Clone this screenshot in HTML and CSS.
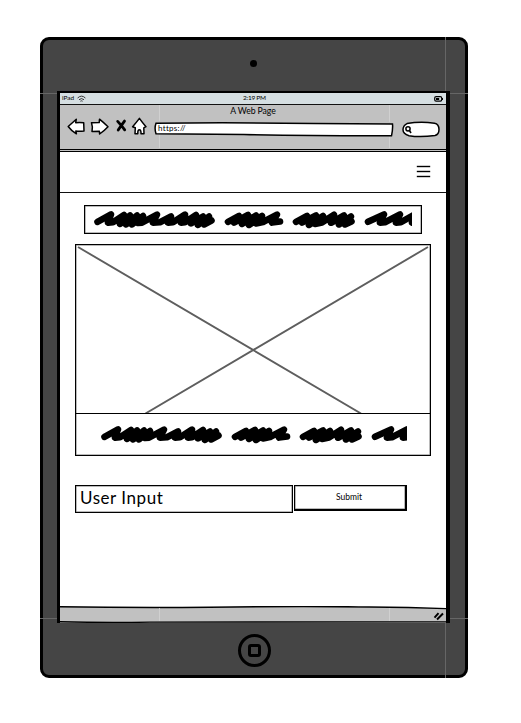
FILE: index.html
```html
<!DOCTYPE html>
<html lang="en">
<head>
<meta charset="utf-8">
<title>A Web Page</title>
<link rel="stylesheet" href="styles.css">
</head>
<body>
<svg class="defs" aria-hidden="true">
  <defs>
    <g id="scribble" fill="none" stroke="#000" stroke-width="6.6" stroke-linecap="round" stroke-linejoin="round">
      <path d="M3.5 11.8 17 4.4 14 12.6 19 12.2 30 5 26 14 36 5.5 32 14.5 43 5.5 38 14.5 49 6 44 13 48 12.6 63 4.6 59 12.6 66 12.2 77 6.5 74 12.6 79 12.2 91 4.6 87 12.6 91 12.2 102 5 97 13.5 109 6.5 104 15 115 6.5 110 14.5 117.5 10.5M94 9H112M27 10H44"/>
      <path d="M134 11.8 145 6 140 12.6 154 5 148 14 162 5.5 155 15 168 6 162 13.5 169 12 183 4.6 178 12.6 186 11.5M138 10H162"/>
      <path d="M202 11.8 213 6 208 12.6 222 5.5 215 15 229 6 221 14 228 12.5 240 4.8 237 12.8 250 5.5 245 14.5 257 6.5 251 14.5 257.5 11.5M206 10H225M240 10H255"/>
      <path d="M274 11.8 290 4.4 286 12.6 291 12.2 306 4.4 302 12.6 307 12.2 321 4.4 318 12.6"/>
    </g>
  </defs>
</svg>
<main class="device">
  <div class="bezel-top"><i class="camera"></i></div>
  <section class="screen">
    <header class="status">
      <span class="carrier">iPad</span>
      <svg class="wifi" viewBox="0 0 9 8"><path d="M.6 3Q4.5-.7 8.4 3M2 4.7q2.5-2.2 5 0M3.4 6.2q1.1-.8 2.2 0" fill="none" stroke="#222" stroke-width=".9"/></svg>
      <span class="time">2:19 PM</span>
      <svg class="battery" viewBox="0 0 9 6"><rect x=".7" y=".7" width="7" height="4.4" rx="1.4" fill="none" stroke="#000" stroke-width="1.2"/><path d="M2 3h3.2" stroke="#000" stroke-width="2"/><path d="M8.5 2v2" stroke="#000"/></svg>
    </header>
    <div class="browser">
      <div class="page-title">A Web Page</div>
      <div class="tools">
        <svg class="nav-icons" viewBox="0 0 82 20" fill="#fff" stroke="#000" stroke-width="1.5" stroke-linejoin="round" stroke-linecap="round">
          <path d="M1.2 9.5 9.3 2.2 8.7 5.7Q13 5.1 16.7 5.8L17 14Q12 14.5 8.8 14L9.4 16.8Q4 13.5 1.2 9.5Z"/>
          <path d="M24.5 5.8 32.2 5.6 32.5 2.2Q36.5 5.5 41 9.7Q37 14 32.6 17L32.4 14.2 25 14.5Q26 10 24.5 5.8Z"/>
          <path d="M50.7 4.4q4 4.4 7 8.4M57.5 4.1q-3.2 4.2-6.3 9" stroke-width="2.8"/>
          <path d="M65.6 9.7Q69 6 72.4 1.4 75.5 5.8 79 9.7L76.8 10.8 77 16.8 74 16.7Q74.2 12.7 72.3 12.8 70.6 12.8 70.8 16.7L68 16.8 68.3 10.8Z"/>
        </svg>
        <div class="address">
          <svg viewBox="0 0 240 15" preserveAspectRatio="none"><path d="M2 1.2Q80 .4 160 1.5L238.5 2Q239 7 237.5 13.8 160 14 90 12.5L2 11.8Q.2 6 2 1.2Z" fill="#fff" stroke="#000" stroke-width="1.5"/></svg>
          <span>https://</span>
        </div>
        <svg class="search" viewBox="0 0 38 17"><path d="M5 2.6Q18 .2 32.5 2.2 37 3 37 8.5 37 13.5 33 14.5 18 16.5 7 14.7 1 13 1 8.8 1 4.5 5 2.6Z" fill="#fff" stroke="#000" stroke-width="1.5"/><circle cx="6" cy="7.8" r="2.1" fill="none" stroke="#000" stroke-width="1.5"/><path d="M7.4 9.5 9 12" stroke="#000" stroke-width="1.6"/></svg>
      </div>
    </div>
    <nav class="navbar"><div class="menu"><i></i><i></i><i></i></div></nav>
    <div class="content">
      <div class="headline"><svg viewBox="0 0 318 19"><use href="#scribble"/></svg></div>
      <figure class="card">
        <svg class="picture" viewBox="0 0 354 168"><path d="M2 2 285 168.5M352 2 69.5 168.5" stroke="#5e5e5e" stroke-width="1.9"/></svg>
        <figcaption><svg viewBox="0 0 306 19"><use href="#scribble"/></svg></figcaption>
      </figure>
      <div class="form"><div class="field">User Input</div><div class="submit"><span>Submit</span></div></div>
    </div>
    <footer class="footer">
      <svg viewBox="0 0 387 17" preserveAspectRatio="none"><path d="M0 .8Q75 2 150 1.3 240-.2 310 1 350 1.2 387 2.6V17H0Z" fill="#c1c1c1"/><path d="M0 .8Q75 2 150 1.3 240-.2 310 1 350 1.2 387 2.6M0 15.7Q45 17 90 16.1 230 16.6 387 15.9" fill="none" stroke="#000" stroke-width="1.4"/><path d="m375.5 11.7 4-4.5m-1.5 6.3 6-6" stroke="#000" stroke-width="2"/></svg>
    </footer>
  </section>
  <div class="home"><i></i></div>
  <svg class="seams" viewBox="0 0 428 641"><path d="M405.5 0v54M405.5 586v55M0 56.5h17M410 56.5h18M0 581.5h17M410 581.5h18" stroke="#666"/><path d="M119.5 68v16M119.5 98v13M349.5 68v17M349.5 100v11M119.5 571v13M349.5 571v13" stroke="#d0d0d0"/></svg>
</main>
</body>
</html>
```

FILE: styles.css
```css
* { box-sizing: border-box; }
body {
  margin: 0;
  padding: 37px 0 0 40px;
  background: #fff;
  color: #000;
  font-family: Lato, "Open Sans", sans-serif;
}
svg { display: block; }
.defs { position: absolute; width: 0; height: 0; }

.device {
  position: relative;
  width: 428px;
  height: 641px;
  border: 3px solid #000;
  border-radius: 9px;
  background: #454545;
  display: flex;
  flex-direction: column;
  align-items: center;
}
.bezel-top {
  height: 51px;
  display: flex;
  padding-top: 20px;
}
.camera {
  width: 7px;
  height: 7px;
  margin-right: 1px;
  border-radius: 50%;
  background: #000;
}

.screen {
  width: 393px;
  height: 532px;
  flex: none;
  margin-right: 1px;
  border: solid #000;
  border-width: 2px 4px 0 3px;
  background: #fff;
  display: flex;
  flex-direction: column;
}
.status {
  height: 12px;
  flex: none;
  display: flex;
  align-items: center;
  padding: 0 3px 0 2px;
  background: #d6dfe2;
  border-bottom: 1px solid #111;
  font-size: 6.5px;
  line-height: 9px;
}
.carrier { width: 15px; margin-top: -2px; }
.wifi { width: 9px; height: 8px; }
.time { margin: -2px 0 0 157px; width: 30px; white-space: nowrap; letter-spacing: -.25px; }
.battery { width: 9px; height: 6px; margin-left: auto; }

.browser {
  height: 47px;
  flex: none;
  background: #c1c1c1;
  border-bottom: 3px double #000;
}
.page-title {
  height: 15px;
  font-size: 8.7px;
  line-height: 12px;
  letter-spacing: -.1px;
  text-align: center;
}
.tools { display: flex; padding-left: 7px; height: 20px; margin-top: -3px; }
.nav-icons { width: 82px; height: 20px; flex: none; }
.address {
  display: grid;
  width: 240px;
  height: 15px;
  flex: none;
  margin: 5px 0 0 5px;
}
.address > * { grid-area: 1 / 1; }
.address svg { width: 240px; height: 15px; }
.address span { padding-left: 4px; font-size: 8px; line-height: 12px; letter-spacing: .3px; }
.search { width: 38px; height: 17px; margin: 4px 0 0 8px; }

.navbar {
  height: 41px;
  flex: none;
  border-bottom: 1px solid #111;
  display: flex;
  justify-content: flex-end;
  padding: 14px 16px 0 0;
}
.menu { width: 13px; display: grid; gap: 4px; align-content: start; }
.menu i { height: 1px; background: #000; box-shadow: 0 0 0 .2px #000; }

.content { padding: 12px 15px 0; flex: 1; }
.headline, .card, .field {
  border: 1px solid #000;
  box-shadow: inset 0 0 0 .5px #777;
}
.headline {
  width: 338px;
  height: 29px;
  margin-left: 9px;
  padding: 4px 0 0 9px;
}
.headline svg { width: 318px; height: 19px; overflow: hidden; }
.card {
  width: 356px;
  height: 212px;
  margin: 10px 0 0;
}
.picture { width: 354px; height: 168px; }
figcaption { border-top: 1px solid #000; padding: 11px 0 0 25px; }
figcaption svg { width: 306px; height: 19px; overflow: hidden; }
.form { display: flex; margin-top: 29px; }
.field {
  width: 218px;
  height: 28px;
  padding-left: 4px;
  font-size: 17px;
  line-height: 23px;
  letter-spacing: .55px;
}
.submit {
  width: 113px;
  height: 26px;
  border: solid #000;
  border-width: 1px 2px 2px 1px;
  box-shadow: inset 0 0 0 .5px #777;
  text-align: center;
  font-size: 8.5px;
  line-height: 23px;
  padding-right: 2px;
  margin-left: 1px;
}
.footer { height: 17px; flex: none; }
.footer svg { width: 100%; height: 17px; }

.home {
  width: 33px;
  height: 33px;
  flex: none;
  margin: 11px 0 0 0;
  border: 3px solid #000;
  border-radius: 50%;
  display: grid;
  place-items: center;
}
.home i { width: 13px; height: 13px; border: 3px solid #000; border-radius: 3px; }
.seams { position: absolute; left: -3px; top: -3px; width: 428px; height: 641px; }
```
